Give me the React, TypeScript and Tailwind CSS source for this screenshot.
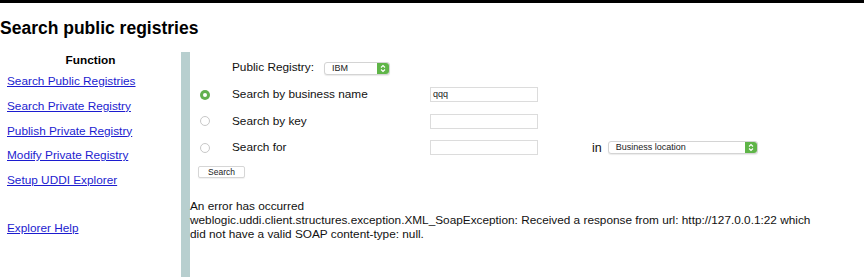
import React from "react";

const Stepper = () => (
  <div className="w-[12px] self-stretch bg-[#5fb548] rounded-r-[3px] flex items-center justify-center">
    <svg width="6" height="9" viewBox="0 0 6 9" fill="none" stroke="white" strokeWidth="1.1">
      <path d="M1 3.5 L3 1.5 L5 3.5" />
      <path d="M1 5.5 L3 7.5 L5 5.5" />
    </svg>
  </div>
);

const FakeSelect = ({ w, text }: { w: string; text: string }) => (
  <div className={`${w} h-[13px] flex border border-[#d4d4d4] rounded-[3px] bg-white shadow-[0_1px_1px_rgba(0,0,0,0.08)]`}>
    <div className="flex-1 flex items-center pl-[7px] text-[9px] text-[#222] leading-none">{text}</div>
    <Stepper />
  </div>
);

const Radio = ({ checked }: { checked?: boolean }) =>
  checked ? (
    <div className="w-[10px] h-[10px] rounded-full bg-[#62b04f] flex items-center justify-center">
      <div className="w-[4px] h-[4px] rounded-full bg-white" />
    </div>
  ) : (
    <div className="w-[10px] h-[10px] rounded-full border border-[#c8c8c8] bg-white" />
  );

const Input = ({ value }: { value?: string }) => (
  <div className="w-[108px] h-[15px] border border-[#dcdcdc] bg-white flex items-center pl-[2px] text-[9px] text-[#222] leading-none">
    {value}
  </div>
);

const links = [
  "Search Public Registries",
  "Search Private Registry",
  "Publish Private Registry",
  "Modify Private Registry",
  "Setup UDDI Explorer",
];

export default function App() {
  return (
    <div className="w-[864px] h-[277px] overflow-hidden bg-white text-[#111] font-['Liberation_Sans',Arial,sans-serif]">
      <div className="h-[3px] bg-black" />
      <h1 className="mt-[15px] h-[20px] leading-[20px] text-[17.5px] font-bold text-black">
        Search public registries
      </h1>
      <div className="mt-[14px] flex h-[300px]">
        <div className="w-[181px] shrink-0">
          <div className="h-[16px] leading-[16px] text-center text-[11.8px] font-bold text-black">Function</div>
          <div className="mt-[5px] flex flex-col pl-[7px]">
            {links.map((l) => (
              <div key={l} className="h-[24.75px] flex items-start">
                <a href="#" className="text-[11.8px] leading-[16px] text-[#1c1ccf] underline">
                  {l}
                </a>
              </div>
            ))}
            <div className="mt-[23.5px] h-[16px] flex items-start">
              <a href="#" className="text-[11.8px] leading-[16px] text-[#1c1ccf] underline">
                Explorer Help
              </a>
            </div>
          </div>
        </div>
        <div className="w-[9px] shrink-0 bg-[#b8cfcf]" />
        <div className="flex-1 pt-[3px]">
          <div className="h-[26.5px] flex items-center pl-[42px] text-[11.8px]">
            <span>Public Registry:</span>
            <div className="ml-[10px]">
              <FakeSelect w="w-[66px]" text="IBM" />
            </div>
          </div>
          {[
            { label: "Search by business name", checked: true, value: "qqq" },
            { label: "Search by key" },
            { label: "Search for", extra: true },
          ].map((r) => (
            <div key={r.label} className="h-[26.6px] flex items-center text-[11.8px]">
              <div className="w-[42px] pl-[10px] flex items-center">
                <Radio checked={r.checked} />
              </div>
              <div className="w-[198px]">{r.label}</div>
              <Input value={r.value} />
              {r.extra && (
                <div className="flex items-center ml-[54px]">
                  <span className="text-[12.5px]">in</span>
                  <div className="ml-[6px]">
                    <FakeSelect w="w-[150px]" text="Business location" />
                  </div>
                </div>
              )}
            </div>
          ))}
          <div className="mt-[5px] pl-[8px] flex">
            <button className="w-[47px] h-[12px] border border-[#d6d6d6] rounded-[2px] bg-white text-[8.5px] leading-none text-[#222] shadow-[0_1px_1px_rgba(0,0,0,0.06)]">
              Search
            </button>
          </div>
          <div className="mt-[21px] text-[11.8px] leading-[14px] text-[#111]">
            <div>An error has occurred</div>
            <div>
              weblogic.uddi.client.structures.exception.XML_SoapException: Received a response from url: http://127.0.0.1:22 which
            </div>
            <div>did not have a valid SOAP content-type: null.</div>
          </div>
        </div>
      </div>
    </div>
  );
}
